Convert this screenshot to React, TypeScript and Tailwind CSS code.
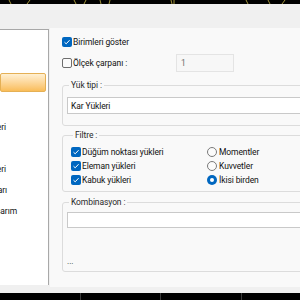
import React from 'react';

const font = { fontFamily: 'Roboto, "Liberation Sans", sans-serif' };

const Check = ({ checked }: { checked: boolean }) =>
  checked ? (
    <span className="w-[10px] h-[10px] rounded-[2px] bg-[#0067c0] flex items-center justify-center shrink-0">
      <svg width="8" height="8" viewBox="0 0 8 8">
        <path d="M1.5 4.2 L3.2 5.8 L6.6 2.2" fill="none" stroke="#fff" strokeWidth="1" />
      </svg>
    </span>
  ) : (
    <span className="w-[10px] h-[10px] rounded-[2px] border border-[#6e6e6e] bg-[#fbfbfb] shrink-0" />
  );

const Radio = ({ checked }: { checked: boolean }) =>
  checked ? (
    <span className="w-[10px] h-[10px] rounded-full bg-[#0067c0] flex items-center justify-center shrink-0">
      <span className="w-[4px] h-[4px] rounded-full bg-white" />
    </span>
  ) : (
    <span className="w-[10px] h-[10px] rounded-full border border-[#7a7a7a] bg-[#fbfbfb] shrink-0" />
  );

// list is scrolled sideways, only the ends of the names show
const listRows = [
  { text: '', selected: false },
  { text: '', selected: false },
  { text: '', selected: true },
  { text: '', selected: false },
  { text: 'Düğüm yükleri', selected: false, end: 'w-[6px]' },
  { text: '', selected: false },
  { text: 'Eleman yükleri', selected: false, end: 'w-[6px]' },
  { text: 'Kabuk kuvvetları', selected: false, end: 'w-[7px]' },
  { text: 'Betonarme tasarım', selected: false, end: 'w-[17px]' },
];

export default function App() {
  return (
    <div
      className="w-[300px] h-[300px] bg-[#f0f0f0] flex flex-col overflow-hidden text-[8.5px] leading-[12px] tracking-[-0.1px] text-[#111]"
      style={font}
    >
      {/* chart strip above the window */}
      <div className="h-[4px] bg-black shrink-0">
        <svg width="300" height="4" viewBox="0 0 300 4">
          <g stroke="#c9b94a" strokeWidth="0.8" fill="none">
            <path d="M9 0 L11 4" />
            <path d="M27 4 L30 0" />
            <path d="M74 0 L76 4 M84 4 L86 0" />
            <path d="M100 0 L101 4 M109 4 L110 0" />
            <path d="M171 0 L172 4 M174 0 L174 4" />
            <path d="M246 0 L248 4" />
            <path d="M268 0 L270 4 M282 4 L285 0" />
          </g>
        </svg>
      </div>

      <div className="h-[24px] shrink-0" />

      <div className="flex h-[259px] shrink-0">
        {/* left list */}
        <div className="w-[49px] mt-[1px] mb-[2px] bg-white border-t border-r border-[#a8a8a8] overflow-hidden shrink-0">
          {listRows.map((r, i) =>
            r.selected ? (
              <div key={i} className="h-[21px] py-[1px] pr-[2px]">
                <div className="h-full border border-[#e5b055] rounded-[2px] bg-gradient-to-b from-[#fff0d2] to-[#f9bd58]" />
              </div>
            ) : (
              <div key={i} className="h-[21px] flex items-center pt-[4px] text-[#111]">
                {r.text && (
                  <div className={`${r.end} flex justify-end whitespace-nowrap`}>{r.text}</div>
                )}
              </div>
            )
          )}
        </div>

        {/* right panel */}
        <div className="ml-[1px] w-[250px] bg-[#f9f9f9] pt-[9px] pl-[12px] overflow-hidden">
          <div className="h-[10px] flex items-center gap-[1px]">
            <Check checked />
            <span>Birimleri göster</span>
          </div>

          <div className="mt-[7px] h-[18px] flex items-center">
            <div className="w-[114px] flex items-center gap-[1px]">
              <Check checked={false} />
              <span>Ölçek çarpanı :</span>
            </div>
            <div className="w-[58px] h-[18px] border border-[#e4e4e4] bg-[#f7f7f7] pl-[4px] flex items-center text-[#6d6d6d]">
              1
            </div>
          </div>

          <fieldset className="mt-[7px] w-[250px] border border-[#dcdcdc] rounded-[3px] pl-[4px] pb-[11px]">
            <legend className="ml-[2px] px-[2px] text-[#2a2a2a]">Yük tipi :</legend>
            <div className="mt-[6px] h-[17px] border border-[#c9c9c9] bg-white pl-[3px] flex items-center">
              Kar Yükleri
            </div>
          </fieldset>

          <fieldset className="mt-[3px] w-[250px] border border-[#dcdcdc] rounded-[3px] pl-[8px] pb-[4px]">
            <legend className="ml-[2px] px-[2px] text-[#2a2a2a]">Filtre :</legend>
            <div className="mt-[4px] flex">
              <div className="w-[136px] flex flex-col">
                {['Düğüm noktası yükleri', 'Eleman yükleri', 'Kabuk yükleri'].map((t) => (
                  <div key={t} className="h-[14px] flex items-center gap-[1px]">
                    <Check checked />
                    <span>{t}</span>
                  </div>
                ))}
              </div>
              <div className="flex flex-col">
                {[
                  ['Momentler', false],
                  ['Kuvvetler', false],
                  ['İkisi birden', true],
                ].map(([t, c]) => (
                  <div key={t as string} className="h-[14px] flex items-center gap-[2px]">
                    <Radio checked={c as boolean} />
                    <span>{t as string}</span>
                  </div>
                ))}
              </div>
            </div>
          </fieldset>

          <fieldset className="mt-[4px] w-[250px] border border-[#dcdcdc] rounded-[3px] pl-[4px] pb-[4px]">
            <legend className="ml-[2px] px-[2px] text-[#2a2a2a]">Kombinasyon :</legend>
            <div className="mt-[4px] h-[16px] border border-[#c9c9c9] bg-white" />
            <div className="mt-[27px] h-[12px] text-[#333]">...</div>
          </fieldset>
        </div>
      </div>

      <div className="h-[6px] shrink-0" />

      {/* taskbar strip */}
      <div className="flex-1 bg-black flex">
        <div className="w-[81px] border-r border-[#3a3a3a]" />
        <div className="w-[80px] border-r border-[#3a3a3a]" />
        <div className="w-[81px] border-r border-[#3a3a3a]" />
      </div>
    </div>
  );
}
